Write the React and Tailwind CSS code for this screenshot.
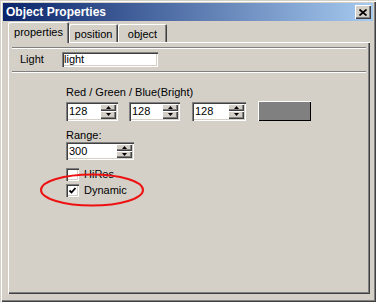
import React from 'react';

// classic 3D edges, done with stacked inset shadows
const raised = 'shadow-[inset_1px_1px_0_#ffffff,inset_-1px_-1px_0_#404040,inset_-2px_-2px_0_#808080]';
const sunken = 'shadow-[inset_1px_1px_0_#808080,inset_2px_2px_0_#404040,inset_-1px_-1px_0_#ffffff,inset_-2px_-2px_0_#d4d0c8]';

const Arrow = ({ down }) => (
  <svg width="5" height="3" viewBox="0 0 5 3">
    {down ? <polygon points="0,0 5,0 2.5,3" fill="#000" /> : <polygon points="2.5,0 5,3 0,3" fill="#000" />}
  </svg>
);

const Spinner = ({ value, className }) => (
  <div className={`flex bg-white p-[2px] ${sunken} ${className}`}>
    <div className="flex-1 flex items-center text-[11px] leading-[13px] pl-[1px]">{value}</div>
    <div className="w-[16px] flex flex-col">
      <div className={`flex-1 flex items-center justify-center bg-[#d4d0c8] ${raised}`}>
        <Arrow />
      </div>
      <div className={`flex-1 flex items-center justify-center bg-[#d4d0c8] ${raised}`}>
        <Arrow down />
      </div>
    </div>
  </div>
);

const Checkbox = ({ label, checked }) => (
  <div className="h-[13px] flex items-center gap-[5px]">
    <div className={`w-[13px] h-[13px] bg-white flex items-center justify-center ${sunken}`}>
      {checked && (
        <svg width="9" height="9" viewBox="0 0 9 9">
          <path d="M1.5 4.5 L3.5 6.5 L7.5 2" stroke="#000" strokeWidth="1.8" fill="none" />
        </svg>
      )}
    </div>
    <span className="text-[11px] leading-[13px]">{label}</span>
  </div>
);

const Separator = () => <div className="h-[2px] border-t border-t-[#808080] border-b border-b-white" />;

export default function App() {
  return (
    <div className="relative w-[376px] h-[302px] bg-[#d4d0c8] p-[3px] flex flex-col text-black font-['Liberation_Sans',Arial,sans-serif] shadow-[inset_1px_1px_0_#d4d0c8,inset_2px_2px_0_#ffffff,inset_-1px_-1px_0_#404040,inset_-2px_-2px_0_#808080]">
      {/* title bar */}
      <div className="h-[18px] flex items-center bg-linear-to-r/srgb from-[#0a246a] to-[#a6caf0] pl-[3px] pr-[2px]">
        <span className="flex-1 text-white font-bold text-[12px] leading-[14px]">Object Properties</span>
        <div className={`w-[16px] h-[14px] bg-[#d4d0c8] flex items-center justify-center ${raised}`}>
          <svg width="8" height="7" viewBox="0 0 8 7">
            <path d="M0.5 0.5 L7.5 6.5 M7.5 0.5 L0.5 6.5" stroke="#000" strokeWidth="1.7" />
          </svg>
        </div>
      </div>

      <div className="flex-1 flex flex-col pl-[5px] pr-[3px] pb-[5px] pt-[1px]">
        {/* tabs */}
        <div className="relative z-10 h-[21px] -mb-[1px] flex items-end text-[11px] leading-[13px]">
          <div className="w-[61px] h-[21px] rounded-t-[2px] bg-[#d4d0c8] pt-[4px] text-center shadow-[inset_1px_1px_0_#ffffff,inset_-1px_0_0_#404040,inset_-2px_0_0_#808080]">
            properties
          </div>
          <div className="w-[49px] h-[18px] mb-[1px] rounded-t-[2px] pt-[4px] text-center shadow-[inset_1px_1px_0_#ffffff,inset_-1px_0_0_#404040,inset_-2px_0_0_#808080]">
            position
          </div>
          <div className="w-[49px] h-[18px] mb-[1px] rounded-t-[2px] pt-[4px] text-center shadow-[inset_1px_1px_0_#ffffff,inset_-1px_0_0_#404040,inset_-2px_0_0_#808080]">
            object
          </div>
        </div>

        {/* tab panel */}
        <div className="flex-1 flex flex-col pt-[5px] px-[4px] shadow-[inset_1px_1px_0_#ffffff,inset_-1px_-1px_0_#404040,inset_-2px_-2px_0_#808080]">
          <Separator />
          <div className="mt-[3px] h-[15px] flex items-center pl-[8px]">
            <span className="w-[42px] text-[11px] leading-[13px]">Light</span>
            <div className={`w-[96px] h-[15px] bg-white px-[2px] flex items-center text-[11px] leading-[13px] ${sunken}`}>
              light
            </div>
          </div>
          <div className="mt-[4px]">
            <Separator />
          </div>

          <div className="ml-[54px] flex flex-col">
            <div className="mt-[13px] text-[11px] leading-[13px]">Red / Green / Blue(Bright)</div>
            <div className="mt-[2px] flex items-center">
              <Spinner value="128" className="w-[52px] h-[19px]" />
              <Spinner value="128" className="ml-[11px] w-[51px] h-[19px]" />
              <Spinner value="128" className="ml-[12px] w-[54px] h-[19px]" />
              <div className="ml-[12px] w-[53px] h-[20px] bg-[#808080] shadow-[inset_1px_1px_0_#ffffff,inset_-1px_-1px_0_#000000]" />
            </div>
            <div className="mt-[8px] text-[11px] leading-[13px]">Range:</div>
            <Spinner value="300" className="w-[68px] h-[18px]" />
            <div className="mt-[8px] flex flex-col gap-[3px]">
              <Checkbox label="HiRes" />
              <Checkbox label="Dynamic" checked />
            </div>
          </div>
        </div>
      </div>

      {/* red annotation ring */}
      <svg className="absolute left-[40px] top-[173px]" width="104" height="34" viewBox="0 0 104 34">
        <ellipse cx="52" cy="17" rx="51" ry="15.5" fill="none" stroke="#ee1111" strokeWidth="2" />
      </svg>
    </div>
  );
}
